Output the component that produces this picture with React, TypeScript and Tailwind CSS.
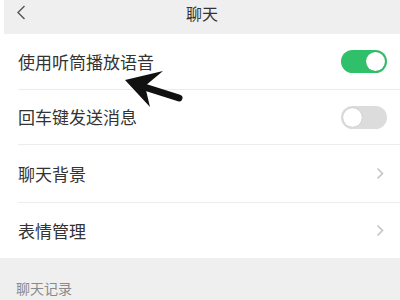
const font = { fontFamily: '"Noto Sans CJK SC", "Liberation Sans", sans-serif' };

function Toggle({ on }: { on: boolean }) {
  return (
    <div
      className={`flex h-[23px] w-[46px] items-center rounded-full p-[2px] ${
        on ? "justify-end bg-[#31c06a]" : "justify-start bg-[#dcdcdc]"
      }`}
    >
      <div className="h-[19px] w-[19px] rounded-full bg-white shadow-[0_0_1px_rgba(0,0,0,0.3)]" />
    </div>
  );
}

function Chevron() {
  return (
    <svg width="8" height="13" viewBox="0 0 8 13" className="mr-[16px]">
      <path d="M1.5 1.5 L6.5 6.5 L1.5 11.5" fill="none" stroke="#c4c4c4" strokeWidth="1.6" />
    </svg>
  );
}

function Row({ label, h, right, last }: { label: string; h: string; right: React.ReactNode; last?: boolean }) {
  return (
    <div className={`ml-[18px] flex items-center justify-between ${h} ${last ? "" : "border-b border-[#ececec]"}`}>
      <span className="text-[17px] text-[#333]">{label}</span>
      {right}
    </div>
  );
}

export default function App() {
  return (
    <div className="relative h-[300px] w-[400px] overflow-hidden bg-white" style={font}>
      <div className="ml-[4px] flex h-[34px] items-center bg-[#efefef] pb-[9px]">
        <svg width="10" height="15" viewBox="0 0 10 15" className="ml-[12px]">
          <path d="M8.5 1 L2 7.5 L8.5 14" fill="none" stroke="#555" strokeWidth="1.4" />
        </svg>
        <div className="flex-1 pr-[22px] text-center text-[16px] text-[#333]">聊天</div>
      </div>

      <Row label="使用听筒播放语音" h="h-[56px]" right={<div className="mr-[13px]"><Toggle on /></div>} />
      <Row label="回车键发送消息" h="h-[55px]" right={<div className="mr-[13px]"><Toggle on={false} /></div>} />
      <Row label="聊天背景" h="h-[58px]" right={<Chevron />} />
      <Row label="表情管理" h="h-[55px]" right={<Chevron />} last />

      <div className="h-[42px] bg-[#efefef] pl-[16px] pt-[20px] text-[14px] text-[#8a8a8a]">聊天记录</div>

      <svg className="absolute left-0 top-0" width="400" height="300" viewBox="0 0 400 300">
        <polygon points="125,80 163,71 145,86 150,107" fill="#111" />
        <line x1="138" y1="85" x2="179" y2="98" stroke="#111" strokeWidth="7" strokeLinecap="round" />
      </svg>
    </div>
  );
}
